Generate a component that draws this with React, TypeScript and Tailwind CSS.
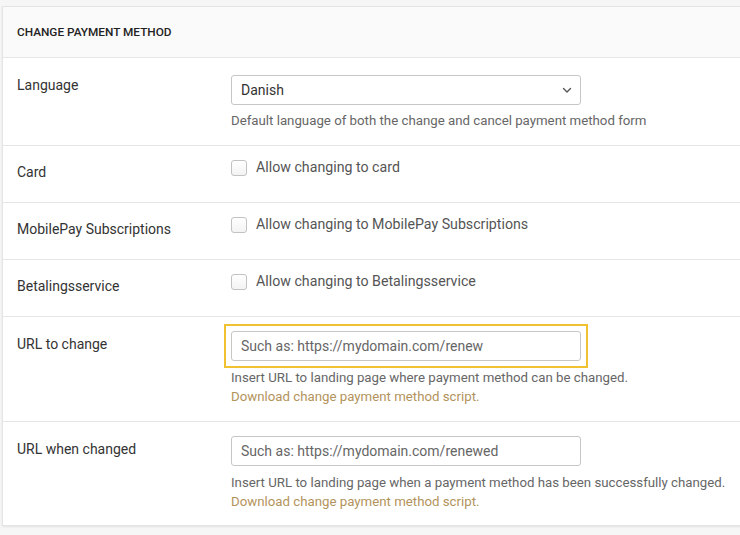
import { useState } from "react";

const labelClass = "w-[228px] shrink-0 pl-[14px] text-[14px] leading-[20px] text-[#333]";
const helpClass = "text-[13.25px] leading-[19px] text-[#666]";
const linkClass = "text-[13.25px] leading-[19px] text-[#b3935b] hover:underline";
const inputClass =
  "h-[30px] w-[350px] rounded-[3px] border border-[#c6c6c6] bg-white px-[9px] text-[14px] text-[#333] outline-none placeholder:text-[#666]";

function Chevron() {
  return (
    <svg width="12" height="12" viewBox="0 0 12 12" fill="none" aria-hidden>
      <path d="M2.5 4.5 6 8l3.5-3.5" stroke="#555" strokeWidth="1.4" strokeLinecap="round" strokeLinejoin="round" />
    </svg>
  );
}

function CheckRow({ label, text }: { label: string; text: string }) {
  const [checked, setChecked] = useState(false);
  return (
    <div className="flex h-[57px] border-b border-[#e6e6e6]">
      <div className={`${labelClass} pt-[16px]`}>{label}</div>
      <label className="mt-[12px] flex h-[20px] cursor-pointer items-center gap-[9px] text-[14.2px] text-[#555]">
        <span
          className={`flex h-[16px] w-[16px] items-center justify-center rounded-[3px] border border-[#c2c2c2] bg-gradient-to-b from-white to-[#f3f3f3] ${
            checked ? "border-[#b3935b]" : ""
          }`}
        >
          {checked && (
            <svg width="10" height="10" viewBox="0 0 10 10" fill="none">
              <path d="M1.5 5.2 4 7.5l4.5-5" stroke="#b3935b" strokeWidth="1.6" />
            </svg>
          )}
        </span>
        <input
          type="checkbox"
          className="hidden"
          checked={checked}
          onChange={(e) => setChecked(e.target.checked)}
        />
        {text}
      </label>
    </div>
  );
}

function UrlRow({
  label,
  placeholder,
  help,
  focused,
  last,
}: {
  label: string;
  placeholder: string;
  help: string;
  focused?: boolean;
  last?: boolean;
}) {
  return (
    <div className={`flex ${last ? "" : "border-b border-[#e6e6e6]"}`}>
      <div className={`${labelClass} pt-[17px]`}>{label}</div>
      <div className={`flex flex-col items-start pt-[14px] ${last ? "pb-[14px]" : "pb-[15px]"}`}>
        <div className="relative">
          <input type="text" placeholder={placeholder} className={inputClass} />
          {/* highlight frame around the active field */}
          {focused && (
            <span className="pointer-events-none absolute -inset-[7px] border-2 border-[#f0c232]" />
          )}
        </div>
        <p className={`${helpClass} mt-[7px]`}>{help}</p>
        <a href="#" className={linkClass}>
          Download change payment method script.
        </a>
      </div>
    </div>
  );
}

export default function App() {
  const [language, setLanguage] = useState("Danish");

  return (
    <div
      className="h-[535px] w-[740px] overflow-hidden bg-[#f6f6f7] pt-[6px] pl-[2px]"
      style={{ fontFamily: "Roboto, 'Noto Sans', Arial, sans-serif" }}
    >
      <div className="w-[780px] border border-[#e4e4e4] bg-white shadow-[0_1px_2px_rgba(0,0,0,0.08)]">
        <div className="flex h-[51px] items-center border-b border-[#e6e6e6] bg-[#fafafa] pl-[14px] pt-[2px]">
          <h2 className="text-[11.8px] font-medium uppercase text-[#222]">
            Change payment method
          </h2>
        </div>

        <div className="flex border-b border-[#e6e6e6]">
          <div className={`${labelClass} pt-[17px]`}>Language</div>
          <div className="flex flex-col items-start pt-[17px] pb-[15px]">
            <div className="relative">
              <select
                value={language}
                onChange={(e) => setLanguage(e.target.value)}
                className={`${inputClass} appearance-none pr-[30px]`}
              >
                <option>Danish</option>
                <option>English</option>
                <option>Swedish</option>
                <option>Norwegian</option>
              </select>
              <span className="pointer-events-none absolute right-[8px] top-[9px]">
                <Chevron />
              </span>
            </div>
            <p className={`${helpClass} mt-[6px]`}>
              Default language of both the change and cancel payment method form
            </p>
          </div>
        </div>

        <CheckRow label="Card" text="Allow changing to card" />
        <CheckRow label="MobilePay Subscriptions" text="Allow changing to MobilePay Subscriptions" />
        <CheckRow label="Betalingsservice" text="Allow changing to Betalingsservice" />

        <UrlRow
          label="URL to change"
          placeholder="Such as: https://mydomain.com/renew"
          help="Insert URL to landing page where payment method can be changed."
          focused
        />
        <UrlRow
          label="URL when changed"
          placeholder="Such as: https://mydomain.com/renewed"
          help="Insert URL to landing page when a payment method has been successfully changed."
          last
        />
      </div>
    </div>
  );
}
